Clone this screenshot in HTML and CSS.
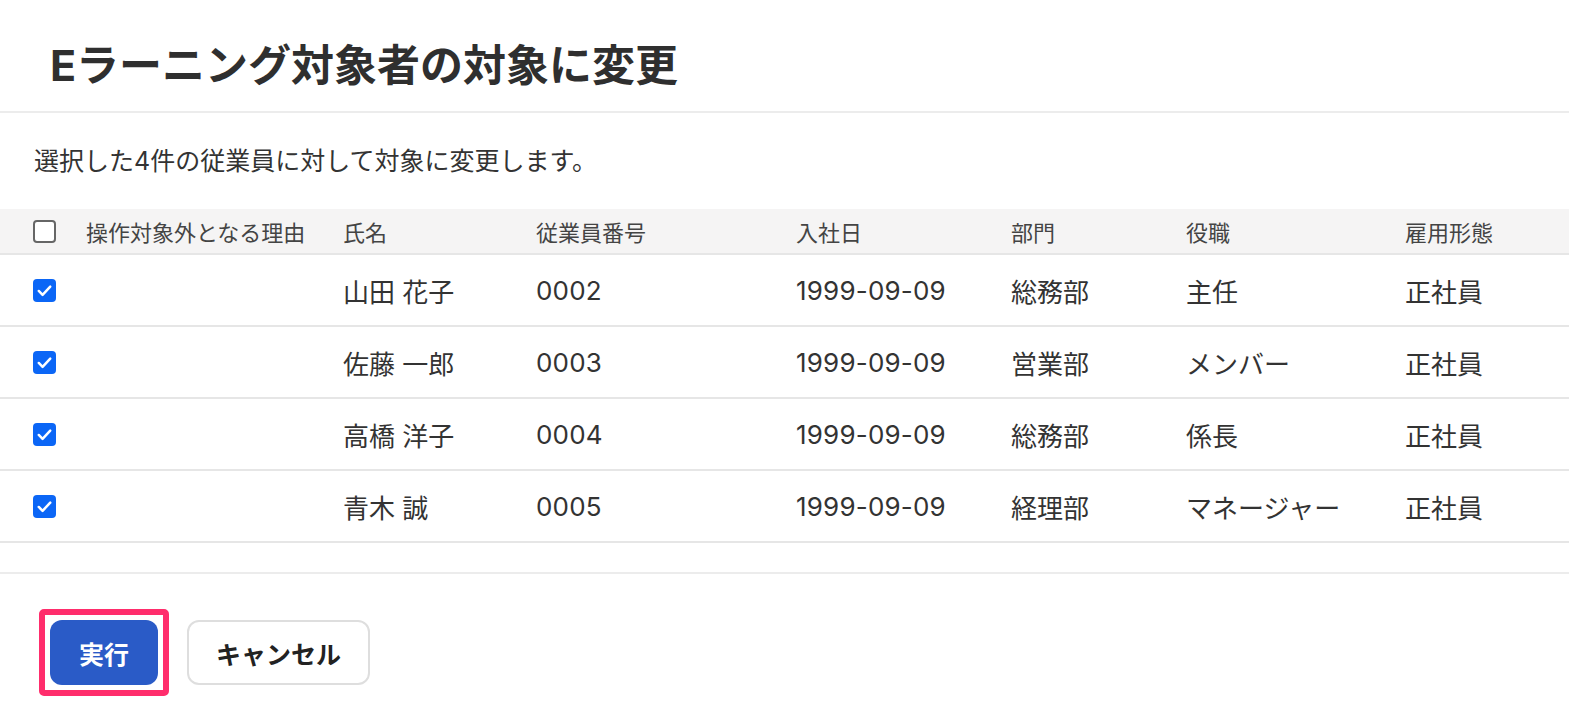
FILE: index.html
```html
<!DOCTYPE html>
<html lang="ja">
<head>
  <meta charset="UTF-8" />
  <meta name="viewport" content="width=device-width, initial-scale=1.0"/>
  <title>Eラーニング対象者の対象に変更</title>
  <link rel="stylesheet" href="styles.css">
</head>
<body>
  <div class="dialog">
    <div class="dialog-head">
      <h1 class="dialog-title">Eラーニング対象者の対象に変更</h1>
    </div>

    <p class="dialog-desc">選択した4件の従業員に対して対象に変更します。</p>

    <table class="emp-table">
      <colgroup>
        <col style="width: 86px">
        <col style="width: 257px">
        <col style="width: 193px">
        <col style="width: 260px">
        <col style="width: 215px">
        <col style="width: 175px">
        <col style="width: 219px">
        <col>
      </colgroup>
      <thead>
        <tr>
          <th class="col-check"><span class="check"></span></th>
          <th>操作対象外となる理由</th>
          <th>氏名</th>
          <th>従業員番号</th>
          <th>入社日</th>
          <th>部門</th>
          <th>役職</th>
          <th>雇用形態</th>
        </tr>
      </thead>
      <tbody>
        <tr>
          <td class="col-check"><span class="check is-on"><svg viewBox="0 0 24 24"><path d="M6 12.5l4 4 8-8.5"/></svg></span></td>
          <td></td>
          <td>山田 花子</td>
          <td class="num">0002</td>
          <td class="num">1999-09-09</td>
          <td>総務部</td>
          <td>主任</td>
          <td>正社員</td>
        </tr>
        <tr>
          <td class="col-check"><span class="check is-on"><svg viewBox="0 0 24 24"><path d="M6 12.5l4 4 8-8.5"/></svg></span></td>
          <td></td>
          <td>佐藤 一郎</td>
          <td class="num">0003</td>
          <td class="num">1999-09-09</td>
          <td>営業部</td>
          <td>メンバー</td>
          <td>正社員</td>
        </tr>
        <tr>
          <td class="col-check"><span class="check is-on"><svg viewBox="0 0 24 24"><path d="M6 12.5l4 4 8-8.5"/></svg></span></td>
          <td></td>
          <td>高橋 洋子</td>
          <td class="num">0004</td>
          <td class="num">1999-09-09</td>
          <td>総務部</td>
          <td>係長</td>
          <td>正社員</td>
        </tr>
        <tr>
          <td class="col-check"><span class="check is-on"><svg viewBox="0 0 24 24"><path d="M6 12.5l4 4 8-8.5"/></svg></span></td>
          <td></td>
          <td>青木 誠</td>
          <td class="num">0005</td>
          <td class="num">1999-09-09</td>
          <td>経理部</td>
          <td>マネージャー</td>
          <td>正社員</td>
        </tr>
      </tbody>
    </table>

    <div class="dialog-foot">
      <span class="focus-ring"><button class="btn btn-primary">実行</button></span>
      <button class="btn btn-plain">キャンセル</button>
    </div>
  </div>
</body>
</html>
```

FILE: styles.css
```css
body {
  margin: 0;
  background: #fff;
  color: #333;
  font-family: Inter, "Noto Sans CJK JP", "Noto Sans", sans-serif;
}

.dialog-head {
  height: 113px;
  box-sizing: border-box;
  padding: 12px 50px 0;
  display: flex;
  align-items: center;
  border-bottom: 2px solid #ececec;
}

.dialog-title {
  margin: 0;
  font-size: 43px;
  font-weight: bold;
  color: #2f2f2f;
}

.dialog-desc {
  margin: 0;
  padding: 28px 34px 0;
  height: 68px;
  line-height: 40px;
  font-size: 25px;
  color: #333;
}

.emp-table {
  width: 100%;
  border-collapse: collapse;
  table-layout: fixed;
}

.emp-table th {
  height: 44px;
  padding: 0;
  background: #f5f4f4;
  border-bottom: 2px solid #e6e6e6;
  text-align: left;
  font-size: 22px;
  font-weight: normal;
  color: #444;
}

.emp-table td {
  height: 70px;
  padding: 0;
  border-bottom: 2px solid #e6e6e6;
  font-size: 26px;
  color: #333;
  white-space: nowrap;
}

.emp-table .num {
  letter-spacing: 0.2px;
}

.emp-table .col-check {
  padding-left: 33px;
}

.check {
  display: block;
  width: 23px;
  height: 23px;
  box-sizing: border-box;
  border: 2px solid #666;
  border-radius: 4px;
  background: #fff;
}

.check.is-on {
  border: none;
  background: #0b66f6;
}

.check svg {
  display: block;
  width: 23px;
  height: 23px;
  fill: none;
  stroke: #fff;
  stroke-width: 2.6;
  stroke-linecap: round;
  stroke-linejoin: round;
}

.dialog-foot {
  margin-top: 29px;
  border-top: 2px solid #ececec;
  padding: 35px 39px 0;
  display: flex;
  align-items: center;
  gap: 18px;
}

.focus-ring {
  display: inline-block;
  border: 6px solid #ff2d6c;
  border-radius: 5px;
  padding: 5px;
}

.btn {
  display: block;
  height: 65px;
  box-sizing: border-box;
  border-radius: 12px;
  font-family: inherit;
  font-size: 25px;
  font-weight: bold;
  cursor: pointer;
}

.btn-primary {
  width: 108px;
  border: none;
  background: #2a5bc7;
  color: #fff;
}

.btn-plain {
  width: 183px;
  border: 2px solid #dedede;
  background: #fff;
  color: #222;
}
```
